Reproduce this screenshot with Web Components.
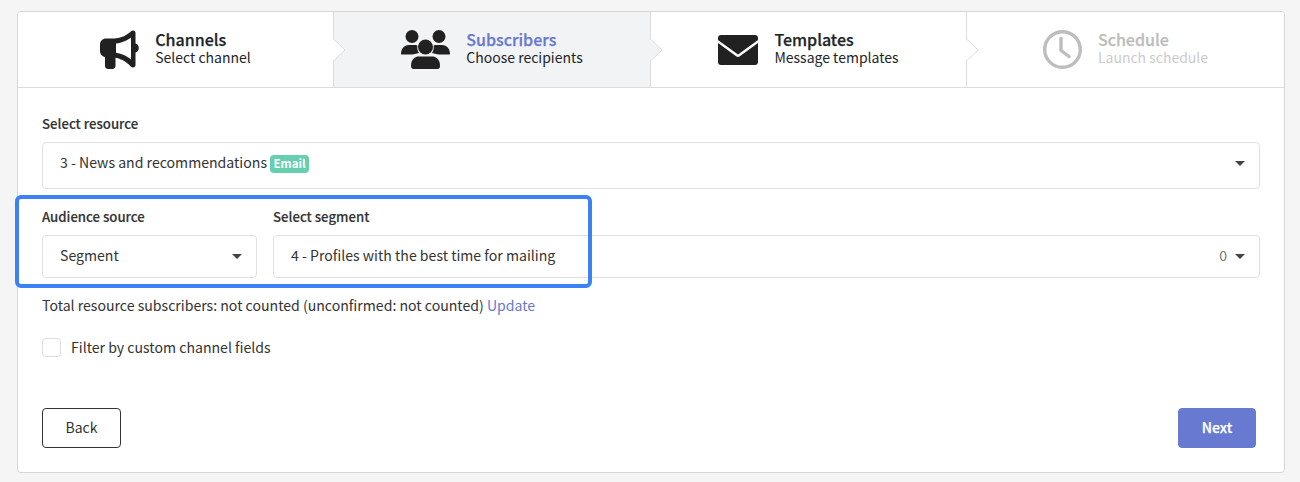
<!DOCTYPE html>
<html>
<head>
<meta charset="utf-8">
<title>Campaign wizard</title>
<style>
  html, body { margin: 0; background: #f5f5f5; }
  body {
    font-family: "Noto Sans CJK SC", "Source Sans Pro", "Open Sans", sans-serif;
    color: #333;
    font-size: 14.1px;
  }
</style>
</head>
<body>
<template id="wizard-step-tpl">
  <style>
    :host {
      display: flex;
      flex: 1 1 0;
      align-items: center;
      justify-content: center;
      gap: 16px;
      position: relative;
      height: 75px;
      box-sizing: border-box;
      background: #fff;
      border-right: 1px solid #ddd;
    }
    :host([active]) { background: #f2f3f5; }
    :host(:last-of-type) { border-right: 0; }
    .icon { display: flex; color: #212121; }
    :host([disabled]) .icon { color: #bdbdbd; }
    .text { padding-bottom: 3px; }
    .title {
      font-size: 16px;
      line-height: 18px;
      font-weight: 500;
      -webkit-text-stroke: 0.25px currentColor;
      color: #212529;
    }
    .sub {
      font-size: 14px;
      line-height: 18px;
      color: #212529;
    }
    :host([active]) .title { color: #6779d0; }
    :host([disabled]) .title { color: #bdbdbd; }
    :host([disabled]) .sub { color: #ccc; }
    .arrow {
      position: absolute;
      left: 100%;
      top: 26px;
      width: 13px;
      height: 24px;
      z-index: 1;
    }
    :host(:last-of-type) .arrow { display: none; }
  </style>
  <span class="icon"><slot name="icon"></slot></span>
  <div class="text">
    <div class="title"></div>
    <div class="sub"></div>
  </div>
  <svg class="arrow" viewBox="0 0 13 24">
    <path d="M-1 0L12 12L-1 24Z" fill="var(--arrow-fill, #fff)"/>
    <path d="M0 0.5L12 12L0 23.5" fill="none" stroke="#ddd"/>
  </svg>
</template>

<template id="wizard-card-tpl">
  <style>
    :host {
      display: block;
      background: #fff;
      border: 1px solid #d6d6d6;
      border-radius: 4px;
      overflow: hidden;
    }
    .steps {
      display: flex;
      border-bottom: 1px solid #ddd;
    }
    .body { padding: 26px 24px 24px 24px; }
  </style>
  <div class="steps"><slot name="steps"></slot></div>
  <div class="body"><slot></slot></div>
</template>

<template id="form-field-tpl">
  <style>
    :host { display: block; }
    label {
      display: block;
      padding-top: 1px;
      font-size: 13.2px;
      line-height: 18px;
      font-weight: 500;
      -webkit-text-stroke: 0.15px currentColor;
      color: #333;
      margin-bottom: 9px;
    }
  </style>
  <label></label>
  <slot></slot>
</template>

<template id="select-box-tpl">
  <style>
    :host {
      display: flex;
      align-items: center;
      box-sizing: border-box;
      height: var(--select-height, 43px);
      padding: 0 14px var(--select-pad, 0) 17px;
      background: #fff;
      border: 1px solid #e0e0e0;
      border-radius: 4px;
      font-size: 14.1px;
      color: #333;
    }
    .value { flex: 1; display: flex; align-items: center; white-space: nowrap; padding-bottom: var(--value-pad, 4px); }
    .count { color: #777; margin-right: 8px; padding-bottom: 4px; }
    .caret {
      width: 0;
      height: 0;
      border-left: 5px solid transparent;
      border-right: 5px solid transparent;
      border-top: 5px solid #444;
    }
  </style>
  <span class="value"><slot></slot></span>
  <span class="count"><slot name="count"></slot></span>
  <span class="caret"></span>
</template>

<template id="channel-badge-tpl">
  <style>
    :host {
      display: inline-block;
      margin-left: 3px;
      padding: 0 3.5px;
      height: 18px;
      line-height: 17px;
      border-radius: 4px;
      background: #66cfb0;
      color: #fff;
      font-size: 11.5px;
      font-weight: 600;
      position: relative;
      top: 2px;
    }
  </style>
  <slot></slot>
</template>

<template id="check-field-tpl">
  <style>
    :host {
      display: flex;
      align-items: center;
      gap: 10px;
      font-size: 14.1px;
      line-height: 19px;
      color: #333;
    }
    .box {
      width: 19px;
      height: 19px;
      box-sizing: border-box;
      background: #fff;
      border: 1px solid #ddd;
      border-radius: 4px;
    }
  </style>
  <span class="box"></span>
  <span><slot></slot></span>
</template>

<template id="action-button-tpl">
  <style>
    :host {
      display: inline-flex;
      align-items: center;
      justify-content: center;
      box-sizing: border-box;
      height: 40px;
      width: 79px;
      padding-bottom: 2px;
      border: 1px solid #333;
      border-radius: 4px;
      background: #fff;
      color: #333;
      font-size: 14px;
    }
    :host([primary]) {
      width: 78px;
      background: #6779d0;
      border-color: #6779d0;
      color: #fff;
      font-weight: 500;
      -webkit-text-stroke: 0.25px #fff;
    }
  </style>
  <slot></slot>
</template>

<template id="wizard-page-tpl">
  <style>
    :host {
      display: block;
      position: relative;
      width: 1268px;
      padding: 11px 15px 9px 17px;
    }
    .callout {
      position: absolute;
      left: 15px;
      top: 195px;
      width: 577px;
      height: 93px;
      box-sizing: border-box;
      border: 4px solid #3b82f6;
      border-radius: 6px;
      pointer-events: none;
    }
  </style>
  <slot></slot>
  <div class="callout"></div>
</template>

<wizard-page>
  <wizard-card>
    <wizard-step slot="steps" style="flex:0 0 316px" title-text="Channels" sub-text="Select channel">
      <svg slot="icon" width="39" height="39" viewBox="0 0 39 39" fill="currentColor">
        <path d="M33 0.500C34.600 0.500 35.500 1.600 35.500 3V13.500C37.500 14 38.800 15.800 38.800 18C38.800 20.200 37.500 22 35.500 22.500V35C35.500 36.400 34.600 37.500 33 37.500C32.200 37.500 31.400 37.100 30.700 36.400C27.500 32.800 22.500 29 15.500 27.700V36C15.500 37.600 14.200 39 12.500 39H8C6.400 39 5 37.600 5 36V27C2.200 26.600 0 24.300 0 21V14.500C0 11 2.700 8.500 6 8.500H14C21.500 8.500 27.500 4.500 30.700 1.500C31.400 0.900 32.200 0.500 33 0.500ZM31 7.500C27.500 10.300 22 13 16 13.500V22.800C22 23.800 27.500 26.500 31 29.500Z"/>
      </svg>
    </wizard-step>
    <wizard-step slot="steps" style="flex:0 0 317px" active title-text="Subscribers" sub-text="Choose recipients">
      <svg slot="icon" width="49" height="39" viewBox="0 0 49 39" fill="currentColor">
        <circle cx="11" cy="6.500" r="6.500"/>
        <circle cx="38" cy="6.500" r="6.500"/>
        <circle cx="24.500" cy="17" r="7.500"/>
        <path d="M0 24C0 18 4 15 8 15H14C15.300 15 16 15.300 16.500 15.600C15.800 18 16.500 21 18 23C13.500 24 11 24.500 9.500 24.500H1C0.400 24.500 0 24.400 0 24Z"/>
        <path d="M49 24C49 18 45 15 41 15H35C33.700 15 33 15.300 32.500 15.600C33.200 18 32.500 21 31 23C35.500 24 38 24.500 39.500 24.500H48C48.600 24.500 49 24.400 49 24Z"/>
        <path d="M10 36C10 29 14 26.500 18 26.500H31C35 26.500 39 29 39 36C39 38 38 39 36.500 39H12.500C11 39 10 38 10 36Z"/>
      </svg>
    </wizard-step>
    <wizard-step slot="steps" style="flex:0 0 316px" title-text="Templates" sub-text="Message templates">
      <svg slot="icon" width="40" height="30" viewBox="0 0 40 30" fill="currentColor">
        <path d="M3 0H37C38.700 0 40 1.300 40 3V5L20 19.500L0 5V3C0 1.300 1.300 0 3 0Z"/>
        <path d="M0 8L18.500 21.500C19.500 22.100 20.500 22.100 21.500 21.500L40 8V27C40 28.700 38.700 30 37 30H3C1.300 30 0 28.700 0 27Z"/>
      </svg>
    </wizard-step>
    <wizard-step slot="steps" disabled title-text="Schedule" sub-text="Launch schedule">
      <svg slot="icon" width="39" height="39" viewBox="0 0 39 39" fill="none" stroke="currentColor">
        <circle cx="19.500" cy="19.500" r="17.800" stroke-width="3.400"/>
        <path d="M18 8.500V20.500L26 26.500" stroke-width="3.400" stroke-linecap="round" stroke-linejoin="round"/>
      </svg>
    </wizard-step>

    <form-field label-text="Select resource" style="--select-height:47px;--select-pad:4px;--value-pad:3px">
      <select-box><span>3 - News and recommendations</span><channel-badge>Email</channel-badge></select-box>
    </form-field>

    <div style="display:flex;gap:16px;margin-top:18px">
      <form-field label-text="Audience source" style="flex:0 0 215px">
        <select-box>Segment</select-box>
      </form-field>
      <form-field label-text="Select segment" style="flex:1">
        <select-box>4 - Profiles with the best time for mailing<span slot="count">0</span></select-box>
      </form-field>
    </div>

    <div style="margin-top:17px;margin-bottom:23px;line-height:20px">Total resource subscribers: not counted (unconfirmed: not counted) <span style="color:#6779d0">Update</span></div>

    <check-field>Filter by custom channel fields</check-field>

    <div style="display:flex;justify-content:space-between;margin-top:51px;padding-right:4px">
      <action-button>Back</action-button>
      <action-button primary>Next</action-button>
    </div>
  </wizard-card>
</wizard-page>

<script>
  function stamp(host, id) {
    const root = host.attachShadow({mode: 'open'});
    root.appendChild(document.getElementById(id).content.cloneNode(true));
    return root;
  }

  class WizardStep extends HTMLElement {
    constructor() {
      super();
      this.shadowDOM = stamp(this, 'wizard-step-tpl');
    }
    connectedCallback() {
      this.shadowDOM.querySelector('.title').textContent = this.getAttribute('title-text');
      this.shadowDOM.querySelector('.sub').textContent = this.getAttribute('sub-text');
      if (this.hasAttribute('active')) this.style.setProperty('--arrow-fill', '#f2f3f5');
    }
  }

  class FormField extends HTMLElement {
    constructor() {
      super();
      this.shadowDOM = stamp(this, 'form-field-tpl');
    }
    connectedCallback() {
      this.shadowDOM.querySelector('label').textContent = this.getAttribute('label-text');
    }
  }

  const simple = {
    'wizard-page': 'wizard-page-tpl',
    'wizard-card': 'wizard-card-tpl',
    'select-box': 'select-box-tpl',
    'channel-badge': 'channel-badge-tpl',
    'check-field': 'check-field-tpl',
    'action-button': 'action-button-tpl'
  };
  Object.keys(simple).forEach(name => {
    customElements.define(name, class extends HTMLElement {
      constructor() {
        super();
        this.shadowDOM = stamp(this, simple[name]);
      }
    });
  });
  customElements.define('wizard-step', WizardStep);
  customElements.define('form-field', FormField);
</script>
</body>
</html>
